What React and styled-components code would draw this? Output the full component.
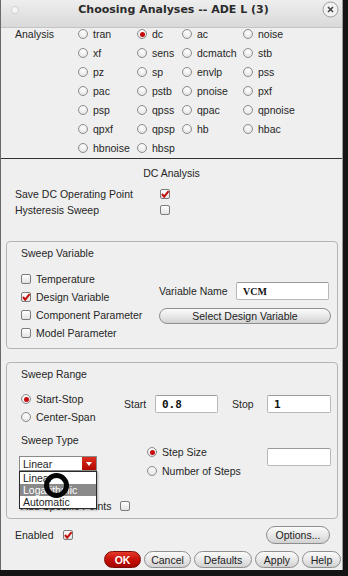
import styled, { createGlobalStyle } from "styled-components";

const GlobalStyle = createGlobalStyle`
  html, body {
    margin: 0;
    padding: 0;
    background: #141414;
  }
  body {
    font-family: "Liberation Sans", Arial, sans-serif;
    font-size: 10.5px;
    color: #262626;
  }
`;

const Dialog = styled.div`
  position: relative;
  width: 343px;
  height: 570px;
  background: #efefef;
  border-left: 1px solid #6a6a6a;
  border-right: 1px solid #9a9a9a;
  box-sizing: border-box;
  display: flex;
  flex-direction: column;
`;

const TitleBar = styled.div`
  height: 28px;
  flex: none;
  display: flex;
  align-items: center;
  justify-content: space-between;
  padding: 0 3px 0 10px;
  background: linear-gradient(#eeeeee, #d9d9d9);
  border-bottom: 1px solid #c4c4c4;
  box-sizing: border-box;
`;

const Title = styled.div`
  font-family: "DejaVu Sans", sans-serif;
  font-weight: bold;
  font-size: 11px;
  color: #2b2b2b;
  margin: -8px 0 0 6px;
`;

const Dot = styled.div`
  width: 6px;
  height: 6px;
  border-radius: 50%;
  background: #f6f6f6;
  border: 1px solid #cfcfcf;
  margin-top: -8px;
`;

const CloseIcon = () => (
  <svg width="17" height="17" viewBox="0 0 17 17" style={{ marginTop: -9 }}>
    <circle cx="8.5" cy="8.5" r="7.5" fill="#f2f2f2" stroke="#9d9d9d" />
    <path d="M6 6 L11 11 M11 6 L6 11" stroke="#444" strokeWidth="1.6" />
  </svg>
);

const AnalysisGrid = styled.div`
  display: grid;
  grid-template-columns: 63px 59px 45px 61px auto;
  grid-auto-rows: 12px;
  row-gap: 7px;
  padding: 0 0 4px 14px;
  align-items: center;
`;

const GridLabel = styled.span`
  line-height: 12px;
`;

const Separator = styled.div`
  height: 1px;
  background: #333;
  flex: none;
`;

const SectionTitle = styled.div`
  text-align: center;
  line-height: 12px;
  padding: 8px 0 0 0;
`;

const OptionList = styled.div`
  display: grid;
  grid-template-columns: 145px auto;
  grid-auto-rows: 12px;
  row-gap: 4px;
  padding: 9px 0 0 14px;
  align-items: center;
`;

const Frame = styled.div`
  position: relative;
  margin: ${(p) => p.$top}px 0 0 5px;
  width: 332px;
  height: ${(p) => p.$h}px;
  flex: none;
  box-sizing: border-box;
  border: 1px solid #b4b4b4;
  border-radius: 4px;
  padding: 5px 6px 0 14px;
`;

const FrameTitle = styled.div`
  line-height: 12px;
`;

const VarBody = styled.div`
  display: flex;
  margin-top: 14px;
`;

const CheckColumn = styled.div`
  width: 139px;
  display: flex;
  flex-direction: column;
  gap: 6px;
`;

const RadioColumn = styled.div`
  width: ${(p) => p.$w}px;
  display: flex;
  flex-direction: column;
  gap: ${(p) => p.$gap || 6}px;
`;

const VarRight = styled.div`
  display: flex;
  flex-direction: column;
  gap: 8px;
  margin-top: 9px;
`;

const FieldRow = styled.div`
  display: flex;
  align-items: center;
  align-self: flex-start;
  margin-top: ${(p) => p.$mt || 0}px;
`;

const FieldLabel = styled.span`
  width: ${(p) => p.$w}px;
  margin-left: ${(p) => p.$ml || 0}px;
  flex: none;
`;

const Input = styled.div`
  width: ${(p) => p.$w}px;
  height: 18px;
  flex: none;
  box-sizing: border-box;
  background: #fff;
  border: 1px solid #b8b8b8;
  border-top-color: #9a9a9a;
  border-radius: 2px;
  padding: 0 6px;
  display: flex;
  align-items: center;
  font-family: ${(p) => (p.$serif ? '"Liberation Serif", serif' : '"DejaVu Sans Mono", monospace')};
  font-weight: bold;
  font-size: ${(p) => (p.$serif ? 10 : 11)}px;
  color: #111;
  margin-top: ${(p) => p.$mt || 0}px;
`;

const Button = styled.div`
  width: ${(p) => p.$w}px;
  height: ${(p) => p.$h || 17}px;
  box-sizing: border-box;
  border: 1px solid #8e8e8e;
  border-radius: 9px;
  background: linear-gradient(#fbfbfb, #e6e6e6 55%, #d2d2d2);
  display: flex;
  align-items: center;
  justify-content: center;
  color: #222;
  flex: none;
`;

const OkButton = styled(Button)`
  background: linear-gradient(#e43a2a, #c30d04 55%, #a40600);
  border-color: #7a0a05;
  color: #fff;
  font-weight: bold;
`;

const Row = styled.span`
  display: flex;
  align-items: center;
  gap: 5px;
  height: 12px;
  line-height: 12px;
  white-space: nowrap;
`;

const RadioCircle = styled.span`
  width: 10px;
  height: 10px;
  box-sizing: border-box;
  border-radius: 50%;
  border: 1px solid #8c8c8c;
  background: radial-gradient(circle at 50% 30%, #ffffff, #dedede);
  display: flex;
  align-items: center;
  justify-content: center;
  flex: none;
  &::after {
    content: "";
    width: 5px;
    height: 5px;
    border-radius: 50%;
    background: #c80c0c;
    display: ${(p) => (p.$on ? "block" : "none")};
  }
`;

const Box = styled.span`
  width: 10px;
  height: 10px;
  box-sizing: border-box;
  border: 1px solid #7c7c7c;
  border-radius: 2px;
  background: linear-gradient(#ffffff, #e2e2e2);
  position: relative;
  flex: none;
  display: block;
`;

const Tick = () => (
  <svg width="10" height="10" viewBox="0 0 10 10" style={{ position: "absolute", left: -1, top: -1 }}>
    <path d="M2 5 L4.2 7.6 L8.6 2.2" fill="none" stroke="#c4100c" strokeWidth="2" />
  </svg>
);

const Radio = ({ label, on }) => (
  <Row>
    <RadioCircle $on={on} />
    {label}
  </Row>
);

const Check = ({ label, on }) => (
  <Row>
    <Box>{on && <Tick />}</Box>
    {label}
  </Row>
);

const CheckBox = ({ on }) => <Box>{on && <Tick />}</Box>;

const RangeBody = styled.div`
  display: flex;
  margin-top: 13px;
`;

const TypeBody = styled.div`
  display: flex;
  position: relative;
`;

const ComboCell = styled.div`
  width: 126px;
  flex: none;
  position: relative;
`;

const Combo = styled.div`
  width: 78px;
  height: 15px;
  box-sizing: border-box;
  margin: 10px 0 0 -2px;
  background: #fff;
  border: 1px solid #8a8a8a;
  display: flex;
  align-items: center;
  justify-content: space-between;
  padding-left: 3px;
`;

const ComboArrow = styled.span`
  width: 14px;
  height: 13px;
  background: linear-gradient(#de2d1e, #b00800);
  display: flex;
  align-items: center;
  justify-content: center;
  &::after {
    content: "";
    border-left: 3px solid transparent;
    border-right: 3px solid transparent;
    border-top: 4px solid #fff;
  }
`;

const ComboList = styled.div`
  position: absolute;
  left: -2px;
  top: 25px;
  width: 78px;
  box-sizing: border-box;
  border: 1px solid #2a2a2a;
  background: #fff;
  z-index: 2;
  box-shadow: 1px 1px 2px rgba(0, 0, 0, 0.3);
`;

const ComboItem = styled.div`
  height: 12px;
  line-height: 12px;
  padding-left: 3px;
  background: ${(p) => (p.$hl ? "#8a8a8a" : "transparent")};
  color: ${(p) => (p.$hl ? "#fff" : "#222")};
`;

const CursorRing = styled.div`
  position: absolute;
  left: 23px;
  top: 27px;
  width: 25px;
  height: 25px;
  box-sizing: border-box;
  border-radius: 50%;
  border: 5px solid #050505;
  z-index: 3;
`;

const SubTitle = styled.div`
  line-height: 12px;
  margin-top: 11px;
`;

const PointsRow = styled.div`
  display: flex;
  align-items: center;
  gap: 9px;
  margin-top: 23px;
  height: 12px;
`;

const Footer = styled.div`
  display: flex;
  align-items: center;
  justify-content: space-between;
  padding: 0 12px 0 14px;
  margin-top: 7px;
`;

const EnabledRow = styled.span`
  display: flex;
  align-items: center;
  gap: 9px;
`;

const ButtonBar = styled.div`
  display: flex;
  justify-content: flex-end;
  gap: 3px;
  padding: 0 1px 0 0;
  margin-top: 7px;
`;

const analyses = [
  ["tran", "dc", "ac", "noise"],
  ["xf", "sens", "dcmatch", "stb"],
  ["pz", "sp", "envlp", "pss"],
  ["pac", "pstb", "pnoise", "pxf"],
  ["psp", "qpss", "qpac", "qpnoise"],
  ["qpxf", "qpsp", "hb", "hbac"],
  ["hbnoise", "hbsp"],
];

export default function App() {
  const cells = [];
  analyses.forEach((row, i) => {
    cells.push(<GridLabel key={"l" + i}>{i === 0 ? "Analysis" : ""}</GridLabel>);
    [0, 1, 2, 3].forEach((j) => {
      cells.push(
        row[j] ? (
          <Radio key={row[j]} label={row[j]} on={row[j] === "dc"} />
        ) : (
          <span key={i + "-" + j} />
        )
      );
    });
  });

  return (
    <>
      <GlobalStyle />
      <Dialog>
        <TitleBar>
          <Dot />
          <Title>Choosing Analyses -- ADE L (3)</Title>
          <CloseIcon />
        </TitleBar>

        <AnalysisGrid>{cells}</AnalysisGrid>

        <Separator />

        <SectionTitle>DC Analysis</SectionTitle>
        <OptionList>
          <span>Save DC Operating Point</span>
          <CheckBox on />
          <span>Hysteresis Sweep</span>
          <CheckBox />
        </OptionList>

        <Frame $top={25} $h={108}>
          <FrameTitle>Sweep Variable</FrameTitle>
          <VarBody>
            <CheckColumn>
              <Check label="Temperature" />
              <Check label="Design Variable" on />
              <Check label="Component Parameter" />
              <Check label="Model Parameter" />
            </CheckColumn>
            <VarRight>
              <FieldRow>
                <FieldLabel $w={77}>Variable Name</FieldLabel>
                <Input $w={93} $serif>VCM</Input>
              </FieldRow>
              <Button $w={172} $h={16}>Select Design Variable</Button>
            </VarRight>
          </VarBody>
        </Frame>

        <Frame $top={13} $h={157}>
          <FrameTitle>Sweep Range</FrameTitle>
          <RangeBody>
            <RadioColumn $w={103}>
              <Radio label="Start-Stop" on />
              <Radio label="Center-Span" />
            </RadioColumn>
            <FieldRow $mt={2}>
              <FieldLabel $w={31}>Start</FieldLabel>
              <Input $w={63}>0.8</Input>
              <FieldLabel $w={35} $ml={14}>Stop</FieldLabel>
              <Input $w={64}>1</Input>
            </FieldRow>
          </RangeBody>
          <SubTitle>Sweep Type</SubTitle>
          <TypeBody>
            <ComboCell>
              <Combo>
                Linear
                <ComboArrow />
              </Combo>
              <ComboList>
                <ComboItem>Linear</ComboItem>
                <ComboItem $hl>Logarithmic</ComboItem>
                <ComboItem>Automatic</ComboItem>
              </ComboList>
              <CursorRing />
            </ComboCell>
            <RadioColumn $w={120} $gap={7}>
              <Radio label="Step Size" on />
              <Radio label="Number of Steps" />
            </RadioColumn>
            <Input $w={64} $mt={2}></Input>
          </TypeBody>
          <PointsRow>
            <span>Add Specific Points</span>
            <CheckBox />
          </PointsRow>
        </Frame>

        <Footer>
          <EnabledRow>
            Enabled
            <CheckBox on />
          </EnabledRow>
          <Button $w={64} $h={18}>Options...</Button>
        </Footer>

        <ButtonBar>
          <OkButton $w={37}>OK</OkButton>
          <Button $w={47}>Cancel</Button>
          <Button $w={58}>Defaults</Button>
          <Button $w={44}>Apply</Button>
          <Button $w={39}>Help</Button>
        </ButtonBar>
      </Dialog>
    </>
  );
}
